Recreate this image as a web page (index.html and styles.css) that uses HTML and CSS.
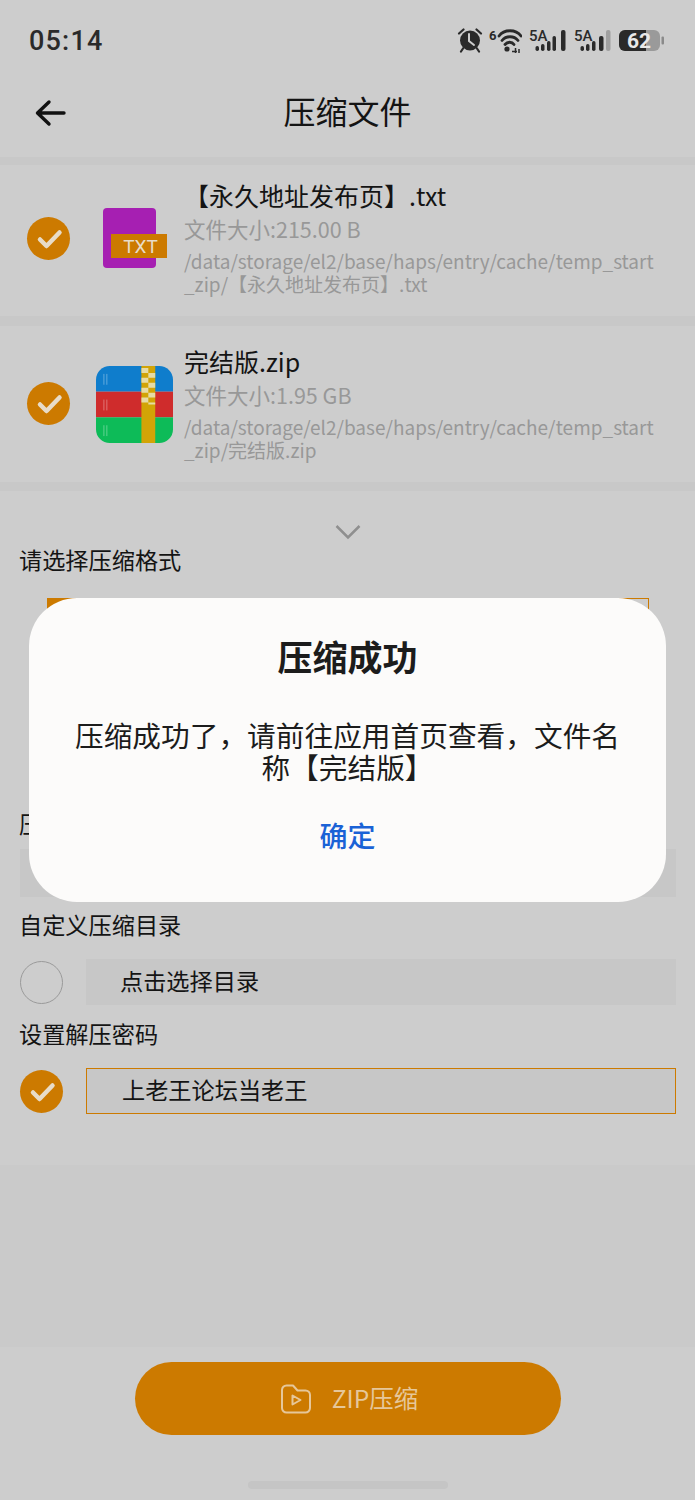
FILE: index.html
```html
<!DOCTYPE html>
<html lang="zh">
<head>
<meta charset="utf-8">
<title>压缩文件</title>
<link rel="stylesheet" href="styles.css">
</head>
<body>
<div class="page">
  <div class="status">
    <span class="time">05:14</span>
    <div class="status-icons">
      <svg class="ic-alarm" width="26" height="26" viewBox="0 0 26 26"><path d="M2 6.500 6.500 2.500M24 6.500 19.500 2.500M6 21.500 4 24.500M20 21.500 22 24.500" stroke="#2a2a2a" stroke-width="2.200" fill="none" stroke-linecap="round"/><circle cx="13" cy="13.500" r="10" fill="#2a2a2a"/><path d="M12 7v7l5 4" stroke="#cdcdcd" stroke-width="2" fill="none" stroke-linecap="round"/></svg>
      <svg class="ic-wifi" width="34" height="26" viewBox="0 0 34 26"><text x="1" y="13" class="st-text st-six">6</text><path d="M11 9C16 2 28 2 33 9M14 13.500C18 8.500 26 8.500 30 13.500M17 17.500C19.500 14.500 24 14.500 26 17.500" stroke="#2a2a2a" stroke-width="2.800" fill="none" stroke-linecap="round"/><circle cx="19" cy="22" r="2.600" fill="#2a2a2a"/><path d="M24 24.500h5M27.500 21v5M31 22v4" stroke="#2a2a2a" stroke-width="1.500"/></svg>
      <svg class="ic-sig" width="38" height="26" viewBox="0 0 38 26"><text x="0" y="14" class="st-text">5A</text><g fill="#2a2a2a"><rect x="6.500" y="19" width="3.500" height="5" rx="1.700"/><rect x="12" y="17" width="3.500" height="7" rx="1.700"/><rect x="18" y="14" width="3.500" height="10" rx="1.700"/><rect x="23.500" y="9" width="3.500" height="15" rx="1.700"/><rect x="32" y="3" width="4.500" height="21" rx="2"/></g></svg>
      <svg class="ic-sig" width="38" height="26" viewBox="0 0 38 26"><text x="0" y="14" class="st-text">5A</text><g fill="#2a2a2a"><rect x="6.500" y="19" width="3.500" height="5" rx="1.700"/><rect x="12" y="17" width="3.500" height="7" rx="1.700"/><rect x="18" y="14" width="3.500" height="10" rx="1.700"/><rect x="25" y="9" width="4.500" height="15" rx="2"/></g><rect x="32" y="3" width="4.500" height="21" rx="2" fill="#a0a0a0"/></svg>
      <svg class="ic-bat" width="46" height="26" viewBox="0 0 46 26"><rect x="0" y="3" width="41" height="21" rx="6" fill="#9a9a9a"/><path d="M6 3H27V24H6A6 6 0 0 1 0 18V9A6 6 0 0 1 6 3Z" fill="#2a2a2a"/><rect x="42.500" y="9.500" width="2.500" height="8" rx="1" fill="#8a8a8a"/><text x="20" y="21" class="bat-text">62</text></svg>
    </div>
  </div>

  <header class="header">
    <svg class="back" width="34" height="34" viewBox="0 0 34 34"><path d="M30 17H4M15 6 3.500 17 15 28" stroke="#111" stroke-width="3.400" fill="none" stroke-linecap="round" stroke-linejoin="round"/></svg>
    <h1 class="title">压缩文件</h1>
  </header>

  <section class="file-list">
    <div class="file-row file-row-a">
      <span class="check"><svg width="43" height="43" viewBox="0 0 43 43"><path d="M13 22.500 19.500 29 32.500 15.500" class="tick"/></svg></span>
      <div class="file-icon">
        <svg width="66" height="62" viewBox="0 0 66 62"><rect x="0" y="0" width="53" height="60" rx="4" fill="#a61fb2"/><rect x="8" y="26" width="56" height="24" fill="#cc7a00"/><text x="37.500" y="45" class="txt-label">TXT</text></svg>
      </div>
      <div class="file-info">
        <div class="file-name">【永久地址发布页】.txt</div>
        <div class="file-size">文件大小:215.00 B</div>
        <div class="file-path">/data/storage/el2/base/haps/entry/cache/temp_start<br>_zip/【永久地址发布页】.txt</div>
      </div>
    </div>
    <div class="file-row file-row-b">
      <span class="check"><svg width="43" height="43" viewBox="0 0 43 43"><path d="M13 22.500 19.500 29 32.500 15.500" class="tick"/></svg></span>
      <div class="file-icon">
        <svg width="77" height="77" viewBox="0 0 78 78">
          <defs><clipPath id="rar"><rect x="0" y="0" width="78" height="78" rx="14"/></clipPath></defs>
          <g clip-path="url(#rar)">
            <rect y="0" width="78" height="26" fill="#0f7dcc"/>
            <rect y="26" width="78" height="26" fill="#cf2c2c"/>
            <rect y="52" width="78" height="26" fill="#0dbb58"/>
            <rect x="46" width="14" height="78" fill="#d2a406"/>
            <path d="M46 2h7v5h-7zM53 7h7v5h-7zM46 12h7v5h-7zM53 17h7v5h-7zM46 22h7v5h-7zM53 27h7v5h-7zM46 32h7v5h-7zM53 37h7v2h-7z" fill="#e6dba6"/>
            <path d="M8 8v11M11 8v11M8 34v11M11 34v11M8 60v11M11 60v11" stroke="#ffffff" stroke-opacity=".35" stroke-width="1"/>
          </g>
        </svg>
      </div>
      <div class="file-info">
        <div class="file-name">完结版.zip</div>
        <div class="file-size">文件大小:1.95 GB</div>
        <div class="file-path">/data/storage/el2/base/haps/entry/cache/temp_start<br>_zip/完结版.zip</div>
      </div>
    </div>
  </section>

  <section class="options">
    <svg class="chevron" width="28" height="16" viewBox="0 0 28 16"><path d="M2.500 2 14 13.500 25.500 2" stroke="#8f8f8f" stroke-width="2.500" fill="none"/></svg>
    <div class="label label-format">请选择压缩格式</div>
    <div class="format-box"><span class="format-on"></span></div>
    <div class="label label-name">压缩文件名称</div>
    <div class="field-name"></div>
    <div class="label label-dir">自定义压缩目录</div>
    <div class="opt-row">
      <span class="radio"></span>
      <div class="field">点击选择目录</div>
    </div>
    <div class="label label-pass">设置解压密码</div>
    <div class="opt-row">
      <span class="radio-on"><svg width="43" height="43" viewBox="0 0 43 43"><path d="M13 22.500 19.500 29 32.500 15.500" class="tick"/></svg></span>
      <div class="field field-active">上老王论坛当老王</div>
    </div>
  </section>

  <div class="spacer"></div>

  <footer class="footer">
    <button class="zip-btn">
      <svg width="32" height="32" viewBox="0 0 32 32"><path d="M2 7a4.500 4.500 0 0 1 4.500-4.500h6.500l4.500 5h8a4.500 4.500 0 0 1 4.500 4.500v13a4.500 4.500 0 0 1-4.500 4.500h-19a4.500 4.500 0 0 1-4.500-4.500Z" fill="none" stroke="#e6c79a" stroke-width="2" stroke-linejoin="round"/><path d="M12.500 12.500v9l8-4.500Z" fill="none" stroke="#e6c79a" stroke-width="2" stroke-linejoin="round"/></svg>
      <span>ZIP压缩</span>
    </button>
    <div class="home-bar"></div>
  </footer>

  <div class="dialog">
    <h2 class="dialog-title">压缩成功</h2>
    <p class="dialog-text">压缩成功了，请前往应用首页查看，文件名称【完结版】</p>
    <div class="dialog-btn">确定</div>
  </div>
</div>
</body>
</html>
```

FILE: styles.css
```css
* { box-sizing: border-box; }
html, body { margin: 0; padding: 0; }
body {
  background: #cdcdcd;
  font-family: "Noto Sans CJK SC", "Noto Sans", sans-serif;
  color: #141414;
}
.page {
  position: relative;
  width: 695px;
  height: 1500px;
  display: flex;
  flex-direction: column;
  overflow: hidden;
}
.status {
  height: 70px;
  flex: none;
  display: flex;
  align-items: center;
  justify-content: space-between;
  padding: 0 30px 0 29px;
  margin-top: 5px;
  margin-bottom: -5px;
}
.time {
  font-family: Roboto, sans-serif;
  font-weight: 500;
  font-size: 27px;
  letter-spacing: 1.200px;
  color: #2a2a2a;
  position: relative;
  top: 1px;
}
.status-icons { display: flex; align-items: center; gap: 7px; }
.ic-wifi { margin-left: -2px; }
.st-text {
  font-family: Roboto, sans-serif;
  font-weight: 500;
  font-size: 15px;
  fill: #2a2a2a;
}
.st-six { font-size: 13px; font-weight: 700; }
.bat-text {
  font-family: Roboto, sans-serif;
  font-weight: 700;
  font-size: 21px;
  fill: #e8e8e8;
  text-anchor: middle;
}
.header {
  height: 87px;
  flex: none;
  position: relative;
  display: flex;
  align-items: center;
  justify-content: center;
}
.back { position: absolute; left: 34px; top: 26px; }
.title { margin: 0 0 8px; font-size: 32px; font-weight: 400; line-height: 1; }

.file-list {
  flex: none;
  display: flex;
  flex-direction: column;
  background: #c8c8c8;
  padding: 8px 0 9px;
  gap: 10px;
}
.file-row {
  background: #cdcdcd;
  display: flex;
  align-items: center;
  position: relative;
}
.file-row-a { height: 151px; }
.file-row-b { height: 156px; }
.check, .radio-on {
  flex: none;
  width: 43px;
  height: 43px;
  border-radius: 50%;
  background: #cc7a00;
  display: block;
}
.check { margin-left: 27px; }
.file-row-a .check { margin-bottom: 4px; }
.file-row-b .check { margin-bottom: 2px; }
.check svg, .radio-on svg { display: block; }
.tick { fill: none; stroke: #e8dcc8; stroke-width: 4.500; stroke-linecap: round; stroke-linejoin: round; }
.file-icon { flex: none; width: 114px; display: flex; }
.file-row-a .file-icon { padding-left: 33px; padding-bottom: 4px; }
.file-row-b .file-icon { padding-left: 26px; }
.file-icon svg { display: block; }
.txt-label { font-family: Roboto, sans-serif; font-size: 19px; fill: #e8dcc8; text-anchor: middle; }
.file-info { flex: 1; min-width: 0; }
.file-row-a .file-info { padding-bottom: 8px; }
.file-row-b .file-info { padding-bottom: 3px; }
.file-name { font-size: 25px; line-height: 34px; color: #141414; white-space: nowrap; }
.file-size { font-size: 21.500px; line-height: 34px; color: #989898; white-space: nowrap; }
.file-path { font-size: 19px; line-height: 23px; color: #989898; white-space: nowrap; margin-top: 3px; }

.options { flex: none; height: 674px; padding: 0 19px 0 20px; display: flex; flex-direction: column; }
.chevron { display: block; margin: 33px auto 0; flex: none; }
.label { font-size: 23.200px; line-height: 32px; color: #141414; flex: none; margin-left: -1px; }
.label-format { margin-top: 3px; }
.format-box { margin: 23px 27px 0; height: 90px; border: 1px solid #cc7a00; flex: none; display: flex; }
.format-on { width: 50%; background: #cc7a00; }
.label-name { margin-top: 119px; }
.field-name { margin-top: 10px; flex: none; height: 48px; background: #c7c7c7; }
.label-dir { margin-top: 11px; }
.label-pass { margin-top: 12px; }
.opt-row { display: flex; align-items: center; gap: 23px; margin-top: 19px; flex: none; }
.radio {
  flex: none;
  width: 43px;
  height: 43px;
  border-radius: 50%;
  border: 1.500px solid #9a9a9a;
  margin-bottom: -1px;
}
.field {
  flex: 1;
  height: 46px;
  background: #c7c7c7;
  font-size: 23.200px;
  line-height: 42px;
  padding-left: 34px;
  color: #141414;
}
.field-active { border: 1.500px solid #cc7a00; padding-left: 35px; line-height: 40px; }

.spacer { flex: 1; background: #cacaca; }
.footer {
  flex: none;
  height: 153px;
  display: flex;
  flex-direction: column;
  align-items: center;
  padding-top: 15px;
}
.zip-btn {
  width: 426px;
  height: 73px;
  border: 0;
  border-radius: 37px;
  background: #cc7a00;
  color: #e6c79a;
  font-family: "Noto Sans CJK SC", sans-serif;
  font-size: 24.500px;
  display: flex;
  align-items: center;
  justify-content: center;
  gap: 20px;
  padding: 0 0 0 3px;
}
.zip-btn svg { display: block; }
.zip-btn span { position: relative; top: -1px; }
.home-bar { width: 200px; height: 8px; border-radius: 4px; background: #c5c5c5; margin-top: 46px; }

.dialog {
  position: absolute;
  left: 29px;
  top: 598px;
  width: 637px;
  height: 304px;
  background: #fcfbfa;
  border-radius: 48px;
  display: flex;
  flex-direction: column;
  align-items: center;
}
.dialog-title { margin: 34px 0 0; font-size: 35px; line-height: 48px; font-weight: 700; color: #1c1c1c; }
.dialog-text { margin: 39px 40px 0; font-size: 28.700px; line-height: 32px; font-weight: 400; color: #1c1c1c; text-align: center; }
.dialog-btn { margin-top: 32px; font-size: 28px; line-height: 40px; font-weight: 500; color: #1a62d6; }
```
